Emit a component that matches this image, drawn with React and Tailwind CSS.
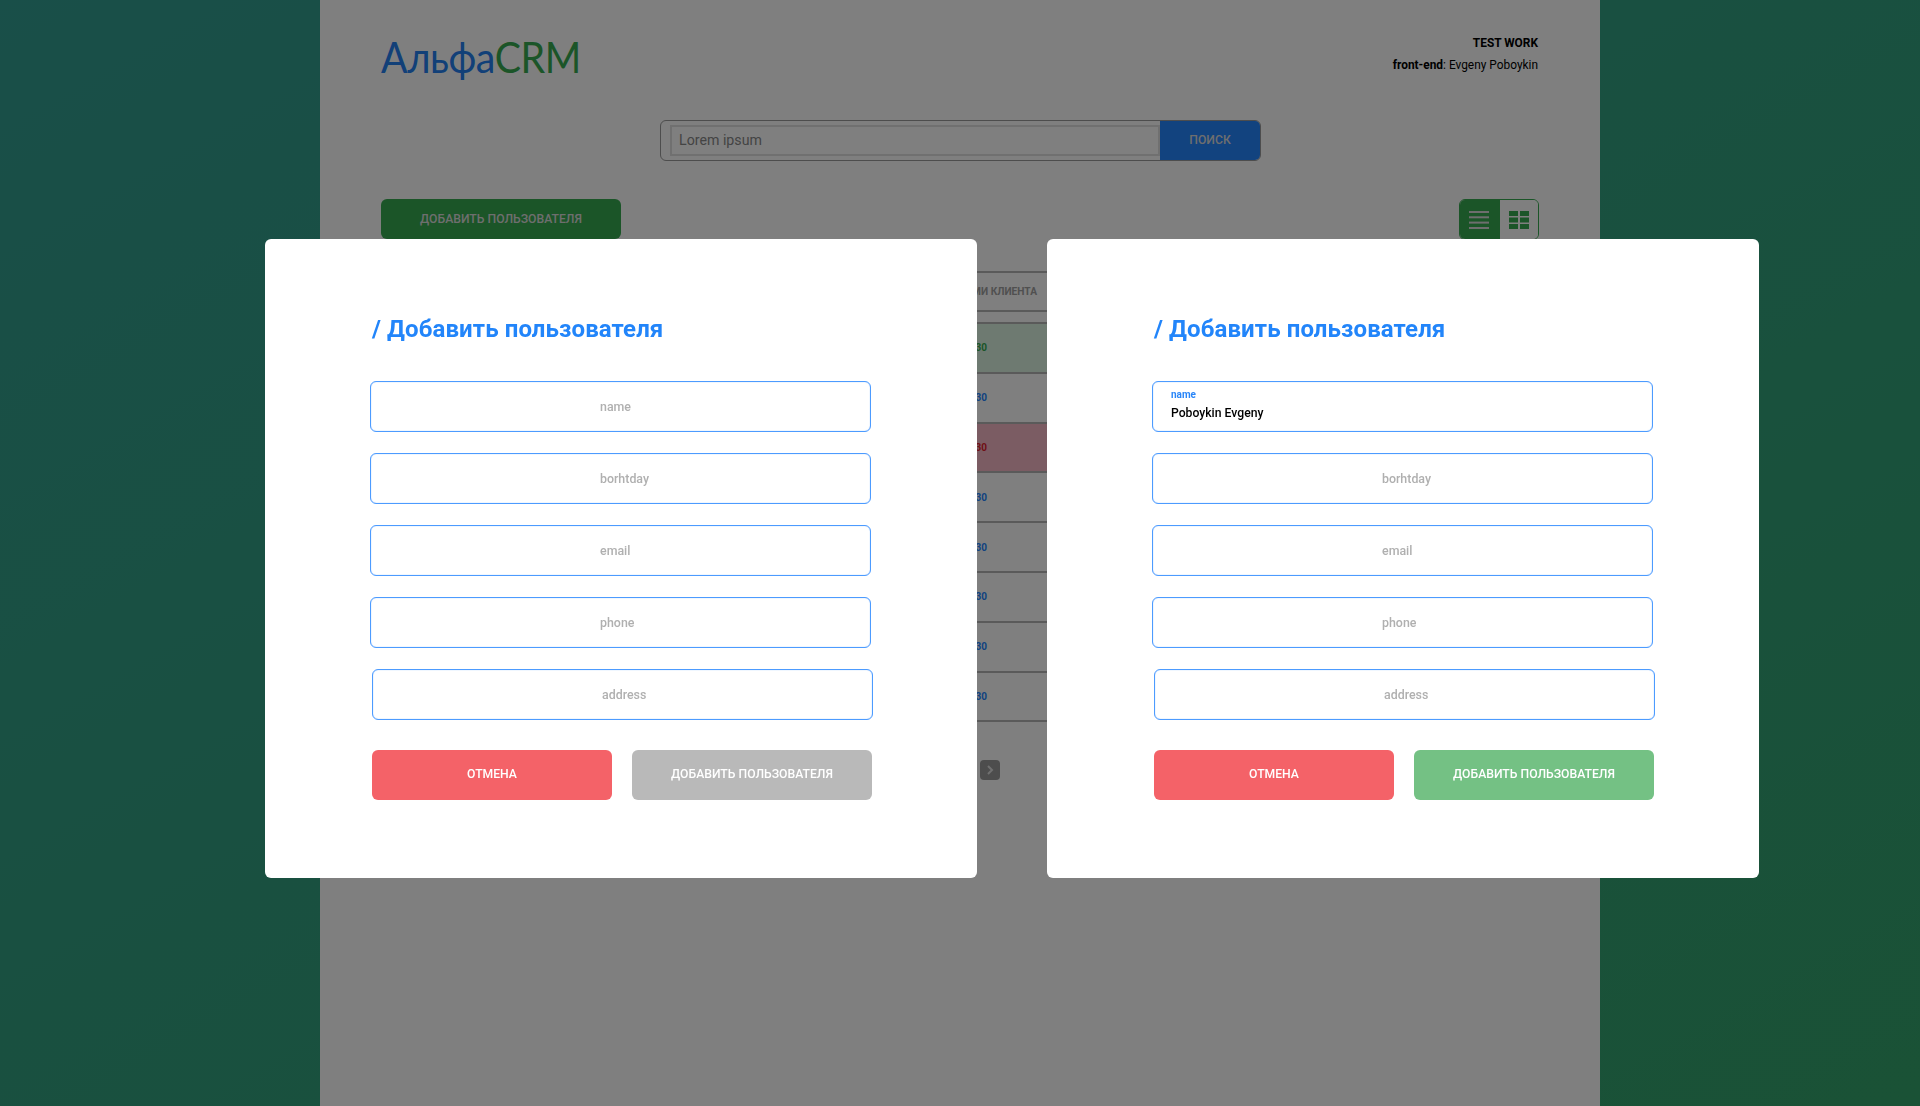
const rows = [
  { bg: "bg-[#dcf5e2]", c: "text-[#36aa50]" },
  { bg: "bg-white", c: "text-[#2486ff]" },
  { bg: "bg-[#f6b8c6]", c: "text-[#e0202c]" },
  { bg: "bg-white", c: "text-[#2486ff]" },
  { bg: "bg-white", c: "text-[#2486ff]" },
  { bg: "bg-white", c: "text-[#2486ff]" },
  { bg: "bg-white", c: "text-[#2486ff]" },
  { bg: "bg-white", c: "text-[#2486ff]" },
];

function Field({ label, value, shifted }) {
  return (
    <div
      className={
        "h-[51px] w-[501px] rounded-[6px] border border-[#4c9bff] bg-white shadow-[inset_0_0_1px_#69a9ff] " +
        (shifted ? "ml-[2px]" : "")
      }
    >
      {value ? (
        <div className="flex h-full flex-col pl-[18px] pt-[6px]">
          <span className="text-[10px] leading-[14px] font-bold text-[#2a86f8]">{label}</span>
          <span className="mt-[2px] text-[12.2px] leading-[18px] font-medium text-black">{value}</span>
        </div>
      ) : (
        <div className="flex h-full items-center pl-[229px] pt-[1px] text-[12.4px] font-medium text-[#b0b0b0]">{label}</div>
      )}
    </div>
  );
}

function Modal({ filled }) {
  return (
    <div className="h-[639px] w-[712px] rounded-[6px] bg-white pl-[105px] pt-[75px]">
      <h2 className="ml-[2px] text-[24px] leading-[30px] font-bold tracking-[0.1px] text-[#2285fa]">/ Добавить пользователя</h2>
      <div className="mt-[37px] flex flex-col gap-[21px]">
        <Field label="name" value={filled ? "Poboykin Evgeny" : null} />
        <Field label="borhtday" />
        <Field label="email" />
        <Field label="phone" />
        <Field label="address" shifted />
      </div>
      <div className="ml-[2px] mt-[30px] flex gap-[20px]">
        <button className="h-[50px] w-[240px] rounded-[6px] bg-[#f46268] pb-[1px] text-[12.2px] font-medium text-white">ОТМЕНА</button>
        <button
          className={
            "h-[50px] w-[240px] rounded-[6px] pb-[1px] text-[12.2px] font-medium text-white " +
            (filled ? "bg-[#74c184]" : "bg-[#b9b9b9]")
          }
        >
          ДОБАВИТЬ ПОЛЬЗОВАТЕЛЯ
        </button>
      </div>
    </div>
  );
}

export default function App() {
  return (
    <div className="relative h-[1106px] overflow-hidden bg-gradient-to-br from-[#329e92] to-[#34a46c] font-['Roboto',sans-serif]">
      <div className="mx-auto h-full w-[1280px] bg-white px-[61px]">
        <header className="flex h-[120px] items-start justify-between">
          <div className="mt-[29px] origin-left scale-x-[0.915] text-[43px] leading-[56px] font-['Lato',sans-serif] tracking-[-0.5px]">
            <span className="text-[#2480f0]">Альфа</span>
            <span className="text-[#36aa50]">CRM</span>
          </div>
          <div className="mr-[1px] mt-[32px] text-right text-[11.9px] leading-[22px] text-black">
            <div className="font-bold">TEST WORK</div>
            <div>
              <b>front-end</b>: Evgeny Poboykin
            </div>
          </div>
        </header>
        <div className="flex justify-start pl-[279px]">
          <div className="flex h-[41px] w-[601px] overflow-hidden rounded-[6px] border border-[#9a9a9a]">
            <div className="flex flex-1 items-center py-[4px] pl-[9px]">
              <div className="flex h-full w-full items-center border-2 border-[#e0e0e0] pl-[7px] text-[14.2px] text-[#888888]">Lorem ipsum</div>
            </div>
            <div className="flex w-[100px] items-center justify-center bg-[#2486ff] text-[12.2px] font-medium text-[#dddddd]">ПОИСК</div>
          </div>
        </div>
        <div className="mt-[38px] flex items-start justify-between">
          <button className="h-[40px] w-[240px] rounded-[6px] bg-[#36aa50] text-[12.2px] font-medium text-[#dddddd]">ДОБАВИТЬ ПОЛЬЗОВАТЕЛЯ</button>
          <div className="flex h-[41px] w-[80px] overflow-hidden rounded-[6px] border border-[#36aa50]">
            <div className="flex flex-1 items-center justify-center bg-[#36aa50] pr-[1px]">
              <svg width="20" height="18" viewBox="0 0 20 18" fill="#dddddd">
                <rect y="0" width="20" height="2" />
                <rect y="5.3" width="20" height="2" />
                <rect y="10.6" width="20" height="2" />
                <rect y="16" width="20" height="2" />
              </svg>
            </div>
            <div className="flex flex-1 items-center justify-center bg-white">
              <svg width="20" height="18" viewBox="0 0 20 18" fill="#36aa50">
                <rect x="0" y="0" width="9" height="5" />
                <rect x="11" y="0" width="9" height="5" />
                <rect x="0" y="6.5" width="9" height="5" />
                <rect x="11" y="6.5" width="9" height="5" />
                <rect x="0" y="13" width="9" height="5" />
                <rect x="11" y="13" width="9" height="5" />
              </svg>
            </div>
          </div>
        </div>
        <div className="mt-[31px]">
          <div className="flex h-[41px] items-center justify-end border-y-2 border-[#b4b4b4] pr-[502px] text-[10.2px] font-bold text-[#a0a0a0]">
            С ДАННЫМИ КЛИЕНТА
          </div>
          <div className="mt-[10px]">
            {rows.map((r, i) => (
              <div
                key={i}
                className={"flex h-[49.8px] items-center justify-start border-t-2 border-[#b4b4b4] " + r.bg}
              >
                <span className={"w-[606px] text-right text-[10px] font-bold " + r.c}>12:30</span>
              </div>
            ))}
            <div className="border-t-2 border-[#b4b4b4]" />
          </div>
          <div className="ml-[599px] mt-[38px] flex h-[20px] w-[20px] items-center justify-center rounded-[4px] bg-[#9a9a9a]">
            <svg width="8" height="10" viewBox="0 0 8 10" fill="none" stroke="#e0e0e0" strokeWidth="2">
              <path d="M2 1l4 4-4 4" />
            </svg>
          </div>
        </div>
      </div>
      <div className="fixed inset-0 bg-black/50" />
      <div className="fixed inset-0 flex gap-[70px] pl-[265px] pt-[239px]">
        <Modal />
        <Modal filled />
      </div>
    </div>
  );
}
